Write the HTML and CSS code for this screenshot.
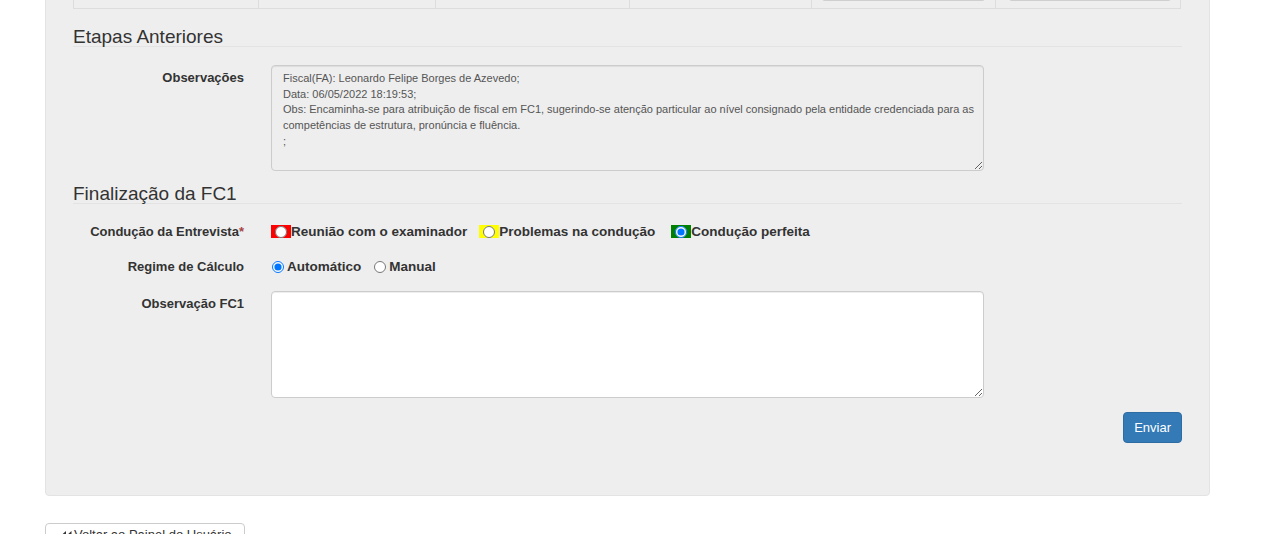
FILE: index.html
```html
<!DOCTYPE html>
<html lang="pt">
<head>
<meta charset="utf-8">
<title>Finalização da FC1</title>
<link rel="stylesheet" href="styles.css">
</head>
<body>
<div class="page">
  <div class="well">
    <table class="grid">
      <tr>
        <td class="c1"></td>
        <td class="c2"></td>
        <td class="c3"></td>
        <td class="c4"></td>
        <td class="c5"><div class="fake-input"></div></td>
        <td class="c6"><div class="fake-input fake-input-b"></div></td>
      </tr>
    </table>

    <h3 class="section section-first">Etapas Anteriores</h3>

    <div class="form-row">
      <label class="lbl">Observações</label>
      <div class="ctl">
        <textarea class="area area-ro" readonly>Fiscal(FA): Leonardo Felipe Borges de Azevedo;
Data: 06/05/2022 18:19:53;
Obs: Encaminha-se para atribuição de fiscal em FC1, sugerindo-se atenção particular ao nível consignado pela entidade credenciada para as competências de estrutura, pronúncia e fluência.
;</textarea>
      </div>
    </div>

    <h3 class="section section-second">Finalização da FC1</h3>

    <div class="form-row inline first-inline">
      <label class="lbl">Condução da Entrevista<span class="req">*</span></label>
      <div class="ctl options options-swatch">
        <label class="opt"><span class="swatch sw-red"><input type="radio" name="cond"></span>Reunião com o examinador</label>
        <label class="opt"><span class="swatch sw-yellow"><input type="radio" name="cond"></span>Problemas na condução</label>
        <label class="opt opt-last"><span class="swatch sw-green"><input type="radio" name="cond" checked></span>Condução perfeita</label>
      </div>
    </div>

    <div class="form-row inline">
      <label class="lbl">Regime de Cálculo</label>
      <div class="ctl options options-plain">
        <label class="opt"><input type="radio" name="regime" checked>Automático</label>
        <label class="opt"><input type="radio" name="regime">Manual</label>
      </div>
    </div>

    <div class="form-row">
      <label class="lbl">Observação FC1</label>
      <div class="ctl">
        <textarea class="area area-white"></textarea>
      </div>
    </div>

    <div class="actions">
      <button class="btn-primary" type="button">Enviar</button>
    </div>
  </div>

  <button class="btn-back" type="button"><svg class="ico" width="12" height="12" viewBox="0 0 12 12"><path d="M6 1 L0.5 6 L6 11 Z M11.5 1 L6 6 L11.5 11 Z" fill="#333"/></svg>Voltar ao Painel do Usuário</button>
</div>
</body>
</html>
```
FILE: styles.css
```css
* { box-sizing: border-box; }

body {
  margin: 0;
  background: #fff;
  font-family: "Liberation Sans", Arial, sans-serif;
  font-size: 13px;
  color: #333;
}

.page {
  padding-left: 45px;
  width: 1210px;
}

.well {
  margin-top: -41px;
  background: #eee;
  border: 1px solid #e3e3e3;
  border-radius: 4px;
  padding: 19px 27px 52px;
}

.grid {
  border-collapse: collapse;
  width: 1108px;
}
.grid td {
  border: 1px solid #ddd;
  height: 28px;
  padding: 0 0 8px;
  vertical-align: bottom;
}
.grid .c1 { width: 185px; }
.grid .c2 { width: 177px; }
.grid .c3 { width: 195px; }
.grid .c4 { width: 182px; }
.grid .c5 { width: 184px; }
.grid .c6 { width: 185px; }

.fake-input {
  height: 20px;
  margin: 0 10px;
  border: 1px solid #c8c8c8;
  border-top: 0;
  border-radius: 0 0 3px 3px;
  box-shadow: 0 1px 0 #cfcfcf;
  background: #fff;
}
.fake-input-b { margin: 0 9px 0 13px; }

.section {
  font-size: 19px;
  font-weight: normal;
  line-height: 19px;
  margin: 0 0 18px;
  padding: 0;
  color: #333;
  border-bottom: 1px solid #e3e3e3;
}
.section-first { margin-top: 18px; }
.section-second { margin-top: 13px; }

.form-row {
  display: flex;
  gap: 27px;
}
.lbl {
  width: 171px;
  flex: none;
  text-align: right;
  font-weight: bold;
  line-height: 19px;
  padding-top: 3px;
}
.req { color: #a94442; }

.ctl { width: 713px; }

.area {
  display: block;
  width: 713px;
  height: 106px;
  border: 1px solid #ccc;
  border-radius: 4px;
  padding: 5px 6px 5px 11px;
  font-family: "Liberation Sans", Arial, sans-serif;
  font-size: 11px;
  line-height: 15.7px;
  color: #555;
  box-shadow: inset 0 1px 1px rgba(0,0,0,.075);
}
.area-ro { background: #eee; }
.area-white { background: #fff; height: 107px; }

.inline { align-items: center; height: 19px; margin-bottom: 15px; }
.inline .lbl { padding-top: 0; }
.first-inline { margin-top: 3px; margin-bottom: 16px; }

.options {
  display: flex;
  align-items: center;
}
.options-swatch { gap: 12px; }
.options-swatch .opt-last { margin-left: 4px; }
.options-plain { gap: 12px; }

.opt {
  display: inline-flex;
  align-items: center;
  font-weight: bold;
  font-size: 13.5px;
  line-height: 19px;
  color: #333;
}

.swatch {
  display: inline-flex;
  align-items: center;
  width: 20px;
  height: 13px;
  padding-left: 4px;
}
.sw-red { background: #ff0000; }
.sw-yellow { background: #ffff00; }
.sw-green { background: #008000; }

.opt input {
  width: 12px;
  height: 12px;
  margin: 0;
}
.options-plain .opt input { margin: 0 3px 0 1px; }

.actions {
  display: flex;
  justify-content: flex-end;
  margin-top: 14px;
}
.btn-primary {
  height: 31px;
  padding: 0 10px;
  font-family: "Liberation Sans", Arial, sans-serif;
  font-size: 13px;
  line-height: 29px;
  color: #fff;
  background: #337ab7;
  border: 1px solid #2e6da4;
  border-radius: 4px;
}

.btn-back {
  display: inline-flex;
  align-items: flex-start;
  gap: 2px;
  margin-top: 27px;
  padding: 1px 12px 6px 14px;
  height: 34px;
  font-family: "Liberation Sans", Arial, sans-serif;
  font-size: 13px;
  line-height: 20px;
  color: #333;
  background: #fff;
  border: 1px solid #ccc;
  border-radius: 4px;
}
.ico { margin-top: 5px; }
```
